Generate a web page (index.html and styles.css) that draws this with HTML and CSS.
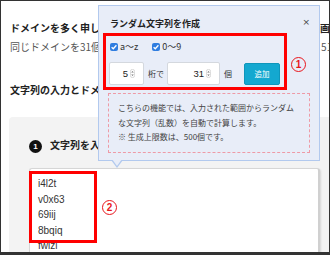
FILE: index.html
```html
<!DOCTYPE html>
<html lang="ja">
<head>
<meta charset="utf-8">
<link rel="stylesheet" href="styles.css">
</head>
<body>
<div class="frame">
  <div class="content">
    <h1 class="title">ドメインを多く申し込む場合に便利な一括入力機能の使い方と説明の画面</h1>
    <p class="lead">同じドメインを31個申し込む場合、ランダムな文字列で一括作成し、51個まで</p>
    <h2 class="section">文字列の入力とドメインの確認</h2>
    <div class="panel">
      <div class="step"><span class="step-num">1</span><span class="step-text">文字列を入力してください</span></div>
      <div class="textbox">
        <div class="line">i4l2t</div>
        <div class="line">v0x63</div>
        <div class="line">69iij</div>
        <div class="line">8bqiq</div>
        <div class="line">fwizl</div>
      </div>
    </div>
  </div>

  <div class="popup">
    <div class="popup-title">ランダム文字列を作成</div>
    <span class="close">×</span>
    <div class="checks">
      <label class="check"><span class="cb"><svg viewBox="0 0 8 8" width="8" height="8"><path d="M1.6 4.2 L3.3 5.8 L6.4 2.3" fill="none" stroke="#fff" stroke-width="1.3"/></svg></span>a～z</label>
      <label class="check"><span class="cb"><svg viewBox="0 0 8 8" width="8" height="8"><path d="M1.6 4.2 L3.3 5.8 L6.4 2.3" fill="none" stroke="#fff" stroke-width="1.3"/></svg></span>0～9</label>
    </div>
    <div class="inputs">
      <span class="num num-short">5<svg class="spin" viewBox="0 0 5 9" width="5" height="9"><rect x="0.4" y="0.4" width="4.2" height="8.2" rx="2" fill="none" stroke="#c8c8c8" stroke-width="0.7"/><path d="M1.2 3.6 L2.5 2 L3.8 3.6 Z M1.2 5.4 L2.5 7 L3.8 5.4 Z" fill="#777"/></svg></span>
      <span class="unit">桁で</span>
      <span class="num num-long">31<svg class="spin" viewBox="0 0 5 9" width="5" height="9"><rect x="0.4" y="0.4" width="4.2" height="8.2" rx="2" fill="none" stroke="#c8c8c8" stroke-width="0.7"/><path d="M1.2 3.6 L2.5 2 L3.8 3.6 Z M1.2 5.4 L2.5 7 L3.8 5.4 Z" fill="#777"/></svg></span>
      <span class="unit">個</span>
      <button class="add">追加</button>
    </div>
    <div class="note">こちらの機能では、入力された範囲からランダム<br>な文字列（乱数）を自動で計算します。<br>※ 生成上限数は、500個です。</div>
    <span class="arrow"></span>
  </div>

  <div class="mark mark-1"></div>
  <span class="badge badge-1">1</span>
  <div class="mark mark-2"></div>
  <span class="badge badge-2">2</span>
</div>
</body>
</html>
```

FILE: styles.css
```css
* { box-sizing: border-box; }
html, body { margin: 0; padding: 0; background: #fff; }
body { font-family: "Noto Sans CJK JP", "Noto Sans", sans-serif; color: #222; }

.frame {
  position: relative;
  width: 330px;
  height: 255px;
  border: 1px solid #333;
  border-bottom-width: 3px;
  overflow: hidden;
  background: #fff;
}

.content {
  width: 640px;
  padding: 20px 0 0 8px;
}

.title, .section {
  margin: 0 0 0 1px;
  font-size: 10px;
  line-height: 14px;
  font-weight: bold;
  color: #222;
  white-space: nowrap;
}
.lead {
  margin: 5px 0 0 1px;
  font-size: 10px;
  line-height: 14px;
  color: #555;
  white-space: nowrap;
}
.section { margin-top: 29px; }

.panel {
  margin-top: 20px;
  background: #f3f3f3;
  border-radius: 4px;
  padding: 21px 0 0 20px;
  height: 200px;
}
.step {
  display: flex;
  align-items: center;
  gap: 8px;
  height: 14px;
}
.step-num {
  width: 13px;
  height: 13px;
  border-radius: 50%;
  background: #111;
  color: #fff;
  font-family: "Liberation Sans", sans-serif;
  font-size: 8px;
  font-weight: bold;
  display: flex;
  align-items: center;
  justify-content: center;
  margin-top: 2px;
}
.step-text {
  font-size: 10px;
  line-height: 14px;
  font-weight: bold;
  white-space: nowrap;
}
.textbox {
  margin-top: 16px;
  width: 291px;
  height: 120px;
  background: #fff;
  border: 1px solid #d6d6d6;
  border-right: 2px solid #d0d0d0;
  border-radius: 3px;
  box-shadow: 1px 1px 2px rgba(0,0,0,0.12);
  padding: 7px 8px;
}
.line {
  font-family: "Liberation Sans", Arial, sans-serif;
  font-size: 10px;
  line-height: 15.5px;
  color: #333;
}

.popup {
  position: absolute;
  left: 97px;
  top: 4px;
  width: 222px;
  background: #e8edf8;
  border: 1px solid #b2c9ee;
  padding: 11px 9px 7px 10px;
}
.popup-title {
  margin-left: 1px;
  font-size: 9px;
  line-height: 14px;
  font-weight: bold;
  color: #222;
}
.close {
  position: absolute;
  right: 9px;
  top: 11px;
  font-family: "DejaVu Sans", sans-serif;
  font-size: 9px;
  line-height: 10px;
  color: #444;
}
.checks {
  margin-top: 10px;
  margin-left: 1px;
  display: flex;
  gap: 14px;
  height: 12px;
  align-items: center;
}
.check {
  display: flex;
  align-items: center;
  gap: 2px;
  font-size: 9px;
  line-height: 12px;
  color: #333;
}
.cb {
  width: 8px;
  height: 8px;
  border-radius: 2px;
  background: #2f7de0;
  display: flex;
}
.inputs {
  margin-top: 9px;
  display: flex;
  align-items: center;
  height: 23px;
}
.num {
  height: 23px;
  background: #fff;
  border: 1px solid #d4d8de;
  border-radius: 2px;
  display: flex;
  align-items: center;
  justify-content: flex-end;
  gap: 2px;
  padding-right: 8px;
  font-family: "Liberation Sans", Arial, sans-serif;
  font-size: 9.5px;
  color: #222;
}
.num-short { width: 35px; }
.num-long { width: 53px; }
.unit {
  font-size: 8px;
  color: #333;
  margin: 0 3px 0 4px;
}
.add {
  margin-left: 9px;
  width: 36px;
  height: 22px;
  background: #14a8d0;
  border: 1px solid #0f96bb;
  border-radius: 2px;
  color: #fff;
  font-family: "Noto Sans CJK JP", sans-serif;
  font-size: 7.5px;
  padding: 0;
}
.note {
  margin: 8px 0 0 -1px;
  width: 202px;
  height: 60px;
  border: 1px dashed #ee9aa6;
  padding: 0 0 0 9px;
  font-size: 8px;
  line-height: 14.5px;
  color: #444;
  white-space: nowrap;
  display: flex;
  flex-direction: column;
  justify-content: center;
}
.arrow {
  position: absolute;
  left: 12px;
  bottom: -8px;
  width: 0;
  height: 0;
  border-left: 6px solid transparent;
  border-right: 6px solid transparent;
  border-top: 8px solid #b2c9ee;
}
.arrow::after {
  content: "";
  position: absolute;
  left: -5px;
  top: -9px;
  border-left: 5px solid transparent;
  border-right: 5px solid transparent;
  border-top: 7px solid #e8edf8;
}

.mark {
  position: absolute;
  border: 3px solid #f00;
}
.mark-1 { left: 102px; top: 32px; width: 184px; height: 57px; }
.mark-2 { left: 28px; top: 170px; width: 68px; height: 72px; }

.badge {
  position: absolute;
  width: 15px;
  height: 15px;
  border: 1.5px solid #e8151b;
  border-radius: 50%;
  color: #e8151b;
  font-family: "Liberation Sans", Arial, sans-serif;
  font-size: 10px;
  font-weight: bold;
  display: flex;
  align-items: center;
  justify-content: center;
}
.badge-1 { left: 290px; top: 56px; }
.badge-2 { left: 101px; top: 199px; }
```
